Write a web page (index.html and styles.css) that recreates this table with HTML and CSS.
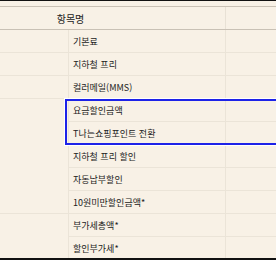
FILE: index.html
```html
<!DOCTYPE html>
<html lang="ko">
<head>
<meta charset="utf-8">
<link rel="stylesheet" href="styles.css">
</head>
<body>
<div class="frame">
  <table class="grid">
    <colgroup><col class="w1"><col class="w2"><col class="w3"></colgroup>
    <thead>
      <tr><th colspan="2">항목명</th><th></th></tr>
    </thead>
    <tbody>
      <tr><td></td><td>기본료</td><td></td></tr>
      <tr><td></td><td>지하철 프리</td><td></td></tr>
      <tr><td></td><td>컬러메일(MMS)</td><td></td></tr>
      <tr><td rowspan="5"></td><td>요금할인금액</td><td></td></tr>
      <tr><td>T나는쇼핑포인트 전환</td><td></td></tr>
      <tr><td>지하철 프리 할인</td><td></td></tr>
      <tr><td>자동납부할인</td><td></td></tr>
      <tr><td>10원미만할인금액*</td><td></td></tr>
      <tr><td rowspan="2"></td><td>부가세총액*</td><td></td></tr>
      <tr><td>할인부가세*</td><td></td></tr>
    </tbody>
  </table>
  <div class="highlight"></div>
</div>
</body>
</html>
```
FILE: styles.css
```css
html, body {
  margin: 0;
  padding: 0;
  background: #f8f1e6;
}
body {
  width: 276px;
  height: 260px;
  overflow: hidden;
}
.frame {
  position: relative;
  box-sizing: border-box;
  height: 260px;
  overflow: hidden;
  border-top: 1px solid #111;
  border-bottom: 2px solid #111;
  padding-top: 5px;
  font-family: "Noto Sans CJK KR", "Noto Sans", sans-serif;
  font-size: 9px;
  color: #222;
}
.grid {
  margin-left: -85px;
  width: 430px;
  table-layout: fixed;
  border-collapse: collapse;
}
.w1 { width: 153px; }
.w2 { width: 157px; }
.w3 { width: 120px; }
.grid th {
  height: 22px;
  padding: 0;
  font-weight: normal;
  font-size: 10px;
  text-align: center;
  border-top: 1px solid #c9c1b5;
  border-bottom: 1px solid #c9c1b5;
  border-left: 1px solid #e8e1d5;
}
.grid td {
  height: 22px;
  padding: 0 0 0 4px;
  white-space: nowrap;
  border-bottom: 1px solid #ebe4d8;
  border-left: 1px solid #ebe4d8;
  vertical-align: middle;
}
.highlight {
  position: absolute;
  left: 65px;
  top: 98px;
  width: 240px;
  height: 46px;
  box-sizing: border-box;
  border: 2px solid #1d22e8;
  box-shadow: 0 0 0 1px #ffffff;
}
```
